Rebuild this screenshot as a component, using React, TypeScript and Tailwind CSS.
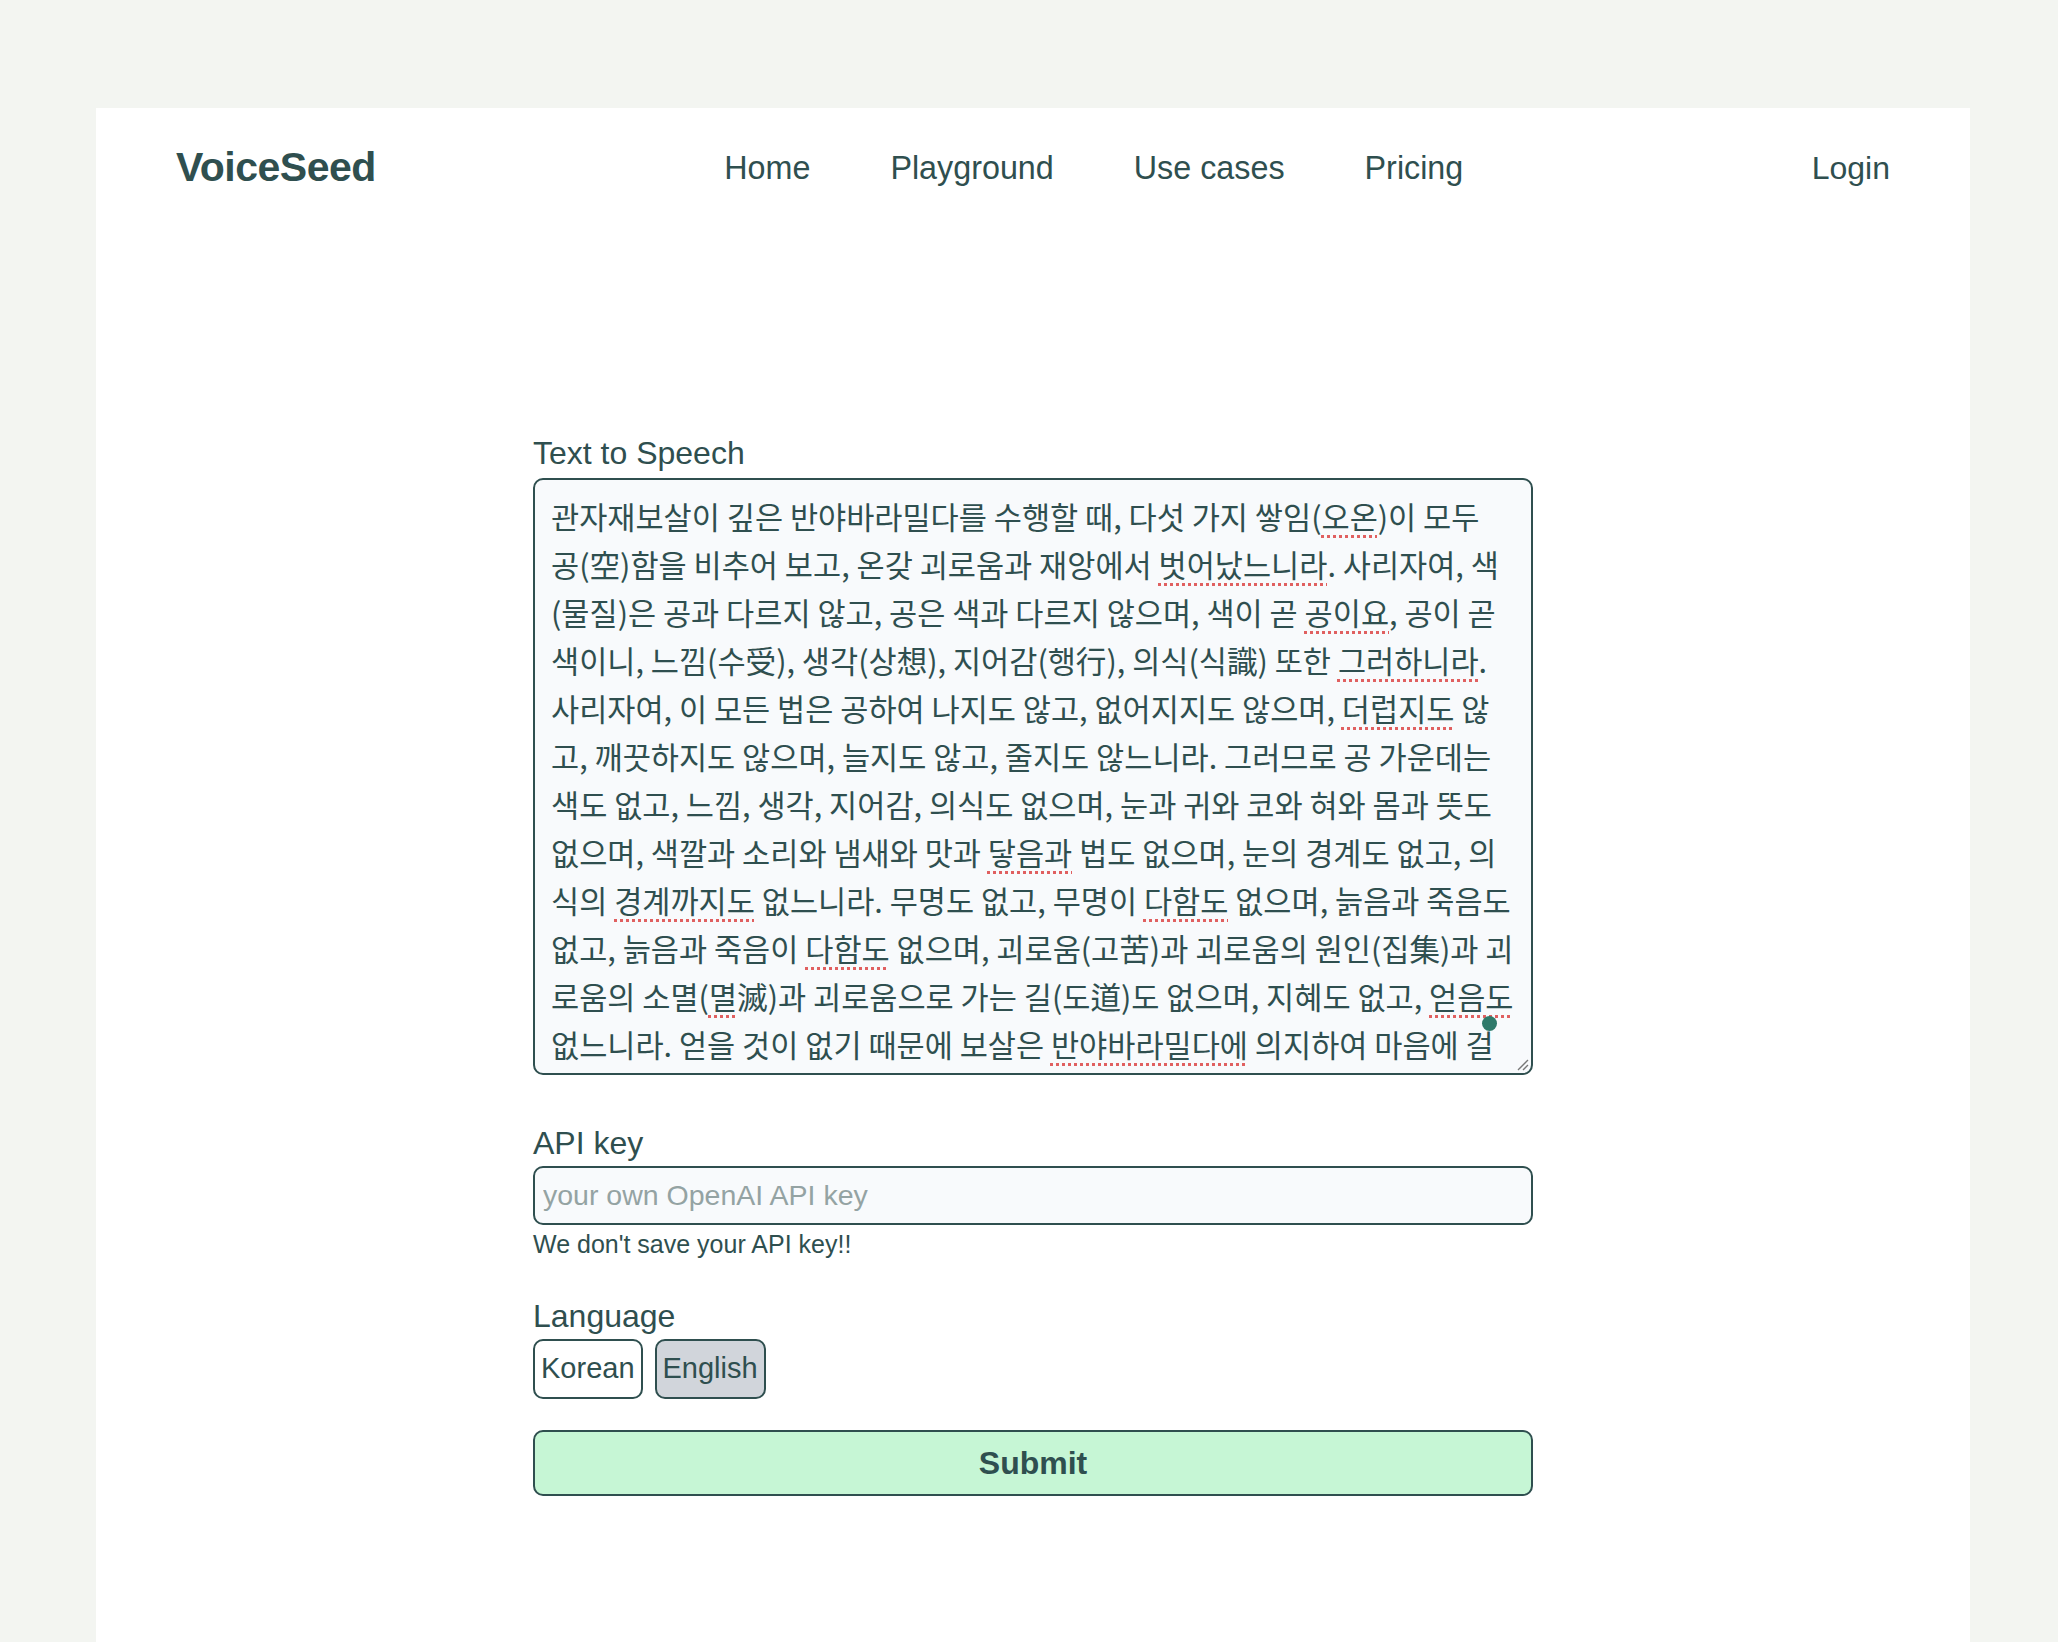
import { FC, ReactNode } from "react";

// 맞춤법 표시 (빨간 점선)
const Sp: FC<{ children: ReactNode }> = ({ children }) => (
  <span className="underline decoration-dotted decoration-[#e06060] decoration-[3px] underline-offset-[6px]">
    {children}
  </span>
);

const lines: ReactNode[] = [
  <>관자재보살이 깊은 반야바라밀다를 수행할 때, 다섯 가지 쌓임(<Sp>오온</Sp>)이 모두</>,
  <>공(空)함을 비추어 보고, 온갖 괴로움과 재앙에서 <Sp>벗어났느니라</Sp>. 사리자여, 색</>,
  <>(물질)은 공과 다르지 않고, 공은 색과 다르지 않으며, 색이 곧 <Sp>공이요</Sp>, 공이 곧</>,
  <>색이니, 느낌(수受), 생각(상想), 지어감(행行), 의식(식識) 또한 <Sp>그러하니라</Sp>.</>,
  <>사리자여, 이 모든 법은 공하여 나지도 않고, 없어지지도 않으며, <Sp>더럽지도</Sp> 않</>,
  <>고, 깨끗하지도 않으며, 늘지도 않고, 줄지도 않느니라. 그러므로 공 가운데는</>,
  <>색도 없고, 느낌, 생각, 지어감, 의식도 없으며, 눈과 귀와 코와 혀와 몸과 뜻도</>,
  <>없으며, 색깔과 소리와 냄새와 맛과 <Sp>닿음과</Sp> 법도 없으며, 눈의 경계도 없고, 의</>,
  <>식의 <Sp>경계까지도</Sp> 없느니라. 무명도 없고, 무명이 <Sp>다함도</Sp> 없으며, 늙음과 죽음도</>,
  <>없고, 늙음과 죽음이 <Sp>다함도</Sp> 없으며, 괴로움(고苦)과 괴로움의 원인(집集)과 괴</>,
  <>로움의 소멸(<Sp>멸</Sp>滅)과 괴로움으로 가는 길(도道)도 없으며, 지혜도 없고, <Sp>얻음도</Sp></>,
  <>없느니라. 얻을 것이 없기 때문에 보살은 <Sp>반야바라밀다에</Sp> 의지하여 마음에 걸</>,
];

const NAV = ["Home", "Playground", "Use cases", "Pricing"];

export default function App() {
  return (
    <div
      className="min-h-screen bg-[#f3f5f1] pt-[108px] pl-[96px] pr-[88px] text-[#2f4f4f]"
      style={{ fontFamily: '"Liberation Sans", "Noto Sans CJK KR", sans-serif' }}
    >
      <div className="bg-white min-h-[1534px] px-[80px] pt-[36px]">
        {/* 헤더 */}
        <header className="flex items-center justify-between h-[48px]">
          <span className="text-[41px] font-bold tracking-[-0.5px]">VoiceSeed</span>
          <nav className="flex gap-[80px] text-[32.3px]">
            {NAV.map((n) => (
              <a key={n} className="cursor-pointer">
                {n}
              </a>
            ))}
          </nav>
          <a className="text-[32px] cursor-pointer">Login</a>
        </header>

        {/* 폼 */}
        <div className="w-[1000px] mx-auto mt-[239px]">
          <label className="block text-[32px] leading-[45px]">Text to Speech</label>
          <div className="relative mt-[2px] h-[597px] rounded-[10px] border-2 border-[#2f4f4f] bg-[#f8fafc] overflow-hidden px-[16px] pt-[12px]">
            <div
              className="text-[30.6px] leading-[48px] whitespace-nowrap"
              style={{ fontFamily: '"Noto Sans CJK KR", "Liberation Sans", sans-serif' }}
            >
              {lines.map((l, i) => (
                <div key={i}>{l}</div>
              ))}
            </div>
            <span className="absolute right-[34px] bottom-[42px] w-[15px] h-[15px] rounded-full bg-[#2f7a6a]" />
            <svg
              className="absolute right-[2px] bottom-[2px]"
              width="14"
              height="14"
              viewBox="0 0 14 14"
            >
              <line x1="13" y1="3" x2="3" y2="13" stroke="#777" strokeWidth="1.3" />
              <line x1="13" y1="8" x2="8" y2="13" stroke="#777" strokeWidth="1.3" />
            </svg>
          </div>

          <label className="block mt-[46px] text-[32px] leading-[45px]">API key</label>
          <input
            placeholder="your own OpenAI API key"
            className="block w-full h-[59px] rounded-[10px] border-2 border-[#2f4f4f] bg-[#f8fafc] px-[8px] text-[28.5px] outline-none placeholder:text-[#94a3a3]"
          />
          <p className="text-[25px] leading-[36px] mt-[1px]">We don't save your API key!!</p>

          <label className="block mt-[32px] text-[32px] leading-[45px]">Language</label>
          <div className="flex gap-[12px] mt-[0px]">
            <button className="h-[60px] px-[6px] rounded-[10px] border-2 border-[#2f4f4f] bg-white text-[29px]">
              Korean
            </button>
            <button className="h-[60px] px-[6px] rounded-[10px] border-2 border-[#2f4f4f] bg-[#d1d5db] text-[29px]">
              English
            </button>
          </div>

          <button className="mt-[31px] w-full h-[66px] rounded-[10px] border-2 border-[#2f4f4f] bg-[#c6f6d5] text-[32px] font-bold">
            Submit
          </button>
        </div>
      </div>
    </div>
  );
}
